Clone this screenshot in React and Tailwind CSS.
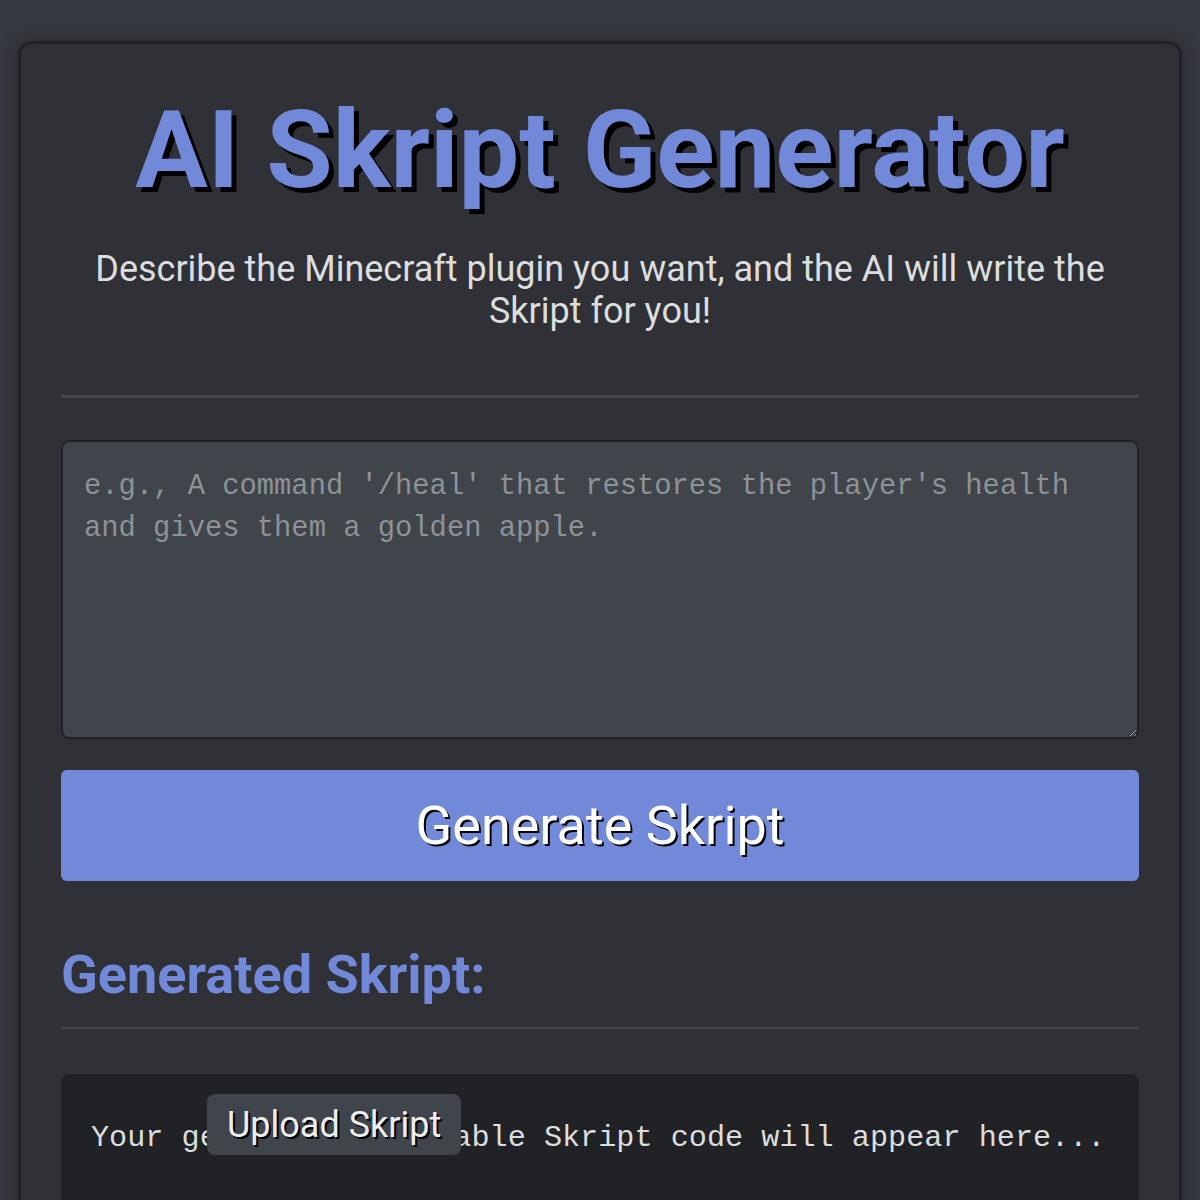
export default function App() {
  return (
    <div className="min-h-[1200px] bg-[#36393f] px-[18px] pt-[41px] overflow-hidden" style={{ fontFamily: "Roboto, 'Noto Sans', sans-serif" }}>
      <div className="bg-[#2f3136] border-[3px] border-[#202225] rounded-[14px] px-[40px] pt-[52px] pb-10 shadow-[0_0_20px_rgba(0,0,0,0.3)]">
        <h1 className="text-center font-bold text-[108px] leading-[108px] text-[#7289da] [text-shadow:5px_5px_0_#000]">AI Skript Generator</h1>
        <p className="text-center text-[36px] leading-[42px] text-[#dcddde] mt-[44px] px-[10px]">Describe the Minecraft plugin you want, and the AI will write the Skript for you!</p>
        <div className="h-[3px] bg-[#40444b] mt-[63px]" />
        <textarea
          className="block w-full mt-[42px] h-[299px] bg-[#40444b] border-2 border-[#202225] rounded-[8px] px-[21px] pt-[24px] pb-[20px] text-[28.8px] leading-[42px] text-[#dcddde] placeholder:text-[#8e9297] outline-none"
          style={{ fontFamily: "'Liberation Mono', 'DejaVu Sans Mono', monospace" }}
          placeholder="e.g., A command '/heal' that restores the player's health and gives them a golden apple."
        />
        <button className="block w-full mt-[31px] h-[111px] bg-[#7289da] rounded-[6px] text-white text-[54px] [text-shadow:2px_2px_0_#000]">Generate Skript</button>
        <h2 className="font-bold text-[54px] leading-[60px] text-[#7289da] mt-[64px]">Generated Skript:</h2>
        <div className="h-[2px] bg-[#40444b] mt-[22px]" />
        <div className="relative mt-[45px] bg-[#202225] rounded-[8px] pl-[30px] pr-[20px] pt-[44px] pb-[60px]">
          <pre className="text-[30.2px] leading-[40px] text-[#dcddde] whitespace-pre" style={{ fontFamily: "'Liberation Mono', 'DejaVu Sans Mono', monospace" }}>Your generated, editable Skript code will appear here...</pre>
          <div className="absolute left-[146px] top-[20px] bg-[#40444b] rounded-[8px] px-[20px] h-[61px] flex items-center text-[36px] text-[#eeeeee] [text-shadow:2px_2px_0_#000]">Upload Skript</div>
        </div>
      </div>
    </div>
  );
}
